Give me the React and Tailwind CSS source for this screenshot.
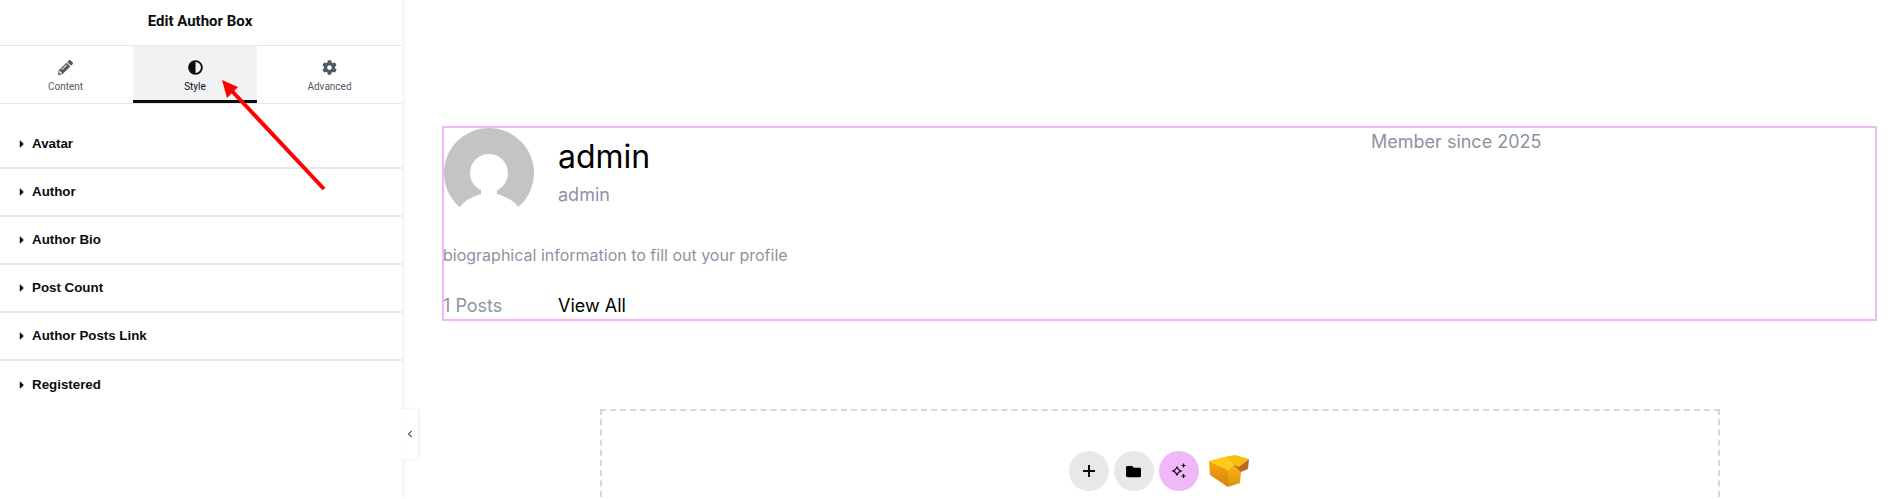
import React from 'react';
import { FaPencilAlt, FaCog, FaCaretRight, FaFolder, FaChevronLeft, FaAdjust } from 'react-icons/fa';

const sections = ['Avatar', 'Author', 'Author Bio', 'Post Count', 'Author Posts Link', 'Registered'];

const Tab = ({ icon, label, active, className }) => (
  <div
    className={`flex flex-col items-center pt-[13px] ${active ? 'bg-[#f1f2f3] text-[#0c0d0e] border-b-[3px] border-[#0c0d0e]' : 'text-[#515962]'} ${className}`}
  >
    <div className="h-[16px] text-[15px] flex items-center">{icon}</div>
    <span className="text-[10px] leading-[14px] mt-[5px]">{label}</span>
  </div>
);

const App = () => {
  return (
    <div className="relative flex w-[1895px] h-[499px] overflow-hidden bg-white font-['Roboto',sans-serif]">
      {/* Panel */}
      <aside className="relative w-[402px] shrink-0 bg-white shadow-[1px_0_6px_rgba(0,0,0,0.08)]">
        <div className="h-[46px] flex items-center justify-center border-b border-[#e6e8ea] text-[15px] font-bold text-[#0c0d0e] pb-[3px] pr-[2px]">
          Edit Author Box
        </div>
        <div className="flex h-[58px] border-b border-[#e6e8ea]">
          <Tab icon={<FaPencilAlt />} label="Content" className="w-[133px] pr-[2px]" />
          <Tab icon={<FaAdjust />} label="Style" active className="w-[124px]" />
          <Tab icon={<FaCog />} label="Advanced" className="flex-1" />
        </div>
        <div className="pt-[17px]">
          {sections.map((name, i) => (
            <div
              key={name}
              className={`h-[48px] flex items-center pl-[15px] gap-[3px] ${i < 5 ? 'border-b-2 border-[#e8e9ea]' : ''}`}
            >
              <FaCaretRight className="text-[12px] text-[#0c0d0e] w-[14px]" />
              <span className="text-[13.33px] font-['Liberation_Sans',sans-serif] font-bold text-[#0c0d0e]">{name}</span>
            </div>
          ))}
        </div>
        <div className="absolute left-[402px] top-[409px] w-[16px] h-[50px] bg-white shadow-[1px_0_3px_rgba(0,0,0,0.08)] flex items-center justify-center text-[#515962]">
          <FaChevronLeft className="text-[8px]" />
        </div>
      </aside>

      {/* Preview */}
      <main className="flex-1 flex flex-col pt-[126px] pl-[40px] pr-[18px] font-['Inter',sans-serif]">
        <div className="h-[195px] shrink-0 border-2 border-[#f0b8f8] flex flex-col">
          <div className="flex h-[97px] shrink-0">
            <div className="w-[114px] shrink-0">
              <svg width="90" height="90" viewBox="0 0 90 90" className="block">
                <circle cx="45" cy="45" r="45" fill="#c4c4c4" />
                <circle cx="45" cy="45" r="19" fill="#fff" />
                <path d="M15 80 Q22 70 37 66 L37 58 L53 58 L53 66 Q68 70 75 80 L90 80 L90 90 L0 90 L0 80 Z" fill="#fff" />
              </svg>
            </div>
            <div className="w-[813px] shrink-0 pt-[9px]">
              <div className="text-[32px] leading-[40px] text-black">admin</div>
              <div className="text-[18px] leading-[24px] mt-[6px] text-[#8d93a3]">admin</div>
            </div>
            <div className="pt-[2px] text-[18px] leading-[24px] text-[#8d93a3]">Member since 2025</div>
          </div>
          <div className="mt-[18px] -ml-[1px] text-[16px] leading-[24px] text-[#8d93a3]">biographical information to fill out your profile</div>
          <div className="flex mt-[27px] -ml-[1px] text-[18px] leading-[24px]">
            <div className="w-[115px] text-[#8d93a3]">1 Posts</div>
            <div className="text-black">View All</div>
          </div>
        </div>

        <div className="mt-[88px] ml-[158px] mr-[157px] h-[200px] shrink-0 border-2 border-dashed border-[#d5d8dc] flex justify-center gap-[5px] pt-[40px] pr-[2px]">
          <div className="w-[40px] h-[40px] rounded-full bg-[#e6e8ea] flex items-center justify-center text-black">
            <svg width="14" height="14" viewBox="0 0 14 14" stroke="#0c0d0e" strokeWidth="2">
              <path d="M7 1v12M1 7h12" />
            </svg>
          </div>
          <div className="w-[40px] h-[40px] rounded-full bg-[#e6e8ea] flex items-center justify-center text-black">
            <FaFolder className="text-[15px]" />
          </div>
          <div className="w-[40px] h-[40px] rounded-full bg-[#f0b8f8] flex items-center justify-center text-black">
            <svg width="18" height="18" viewBox="0 0 18 18" fill="none" stroke="#0c0d0e" strokeWidth="1.2">
              <path d="M7 4.5c.5 2.6 1.6 3.7 4 4.5-2.4.8-3.5 1.9-4 4.5-.5-2.6-1.6-3.7-4-4.5 2.4-.8 3.5-1.9 4-4.5z" />
              <path d="M13.5 1.5v4M11.5 3.5h4M13.5 12v4M11.5 14h4" />
            </svg>
          </div>
          <svg width="41" height="33" viewBox="0 0 41 33" className="ml-[5px] mt-[4px]">
            <defs>
              <linearGradient id="cube-front" x1="0" y1="0" x2="0" y2="1">
                <stop offset="0" stopColor="#f5a80c" />
                <stop offset="1" stopColor="#d9800f" />
              </linearGradient>
              <linearGradient id="cube-right" x1="0" y1="0" x2="0" y2="1">
                <stop offset="0" stopColor="#f8b80a" />
                <stop offset="1" stopColor="#e0920f" />
              </linearGradient>
            </defs>
            <path d="M0 6 L19 15 L19 32 L1 20 Z" fill="url(#cube-front)" />
            <path d="M19 15 L24 10 L32 17 L31 28 L19 32 Z" fill="url(#cube-right)" />
            <path d="M0 6 L15 2 L24 10 L19 15 Z" fill="#ffcb12" />
            <path d="M15 2 L26 0 L40 4 L32 11 L32 17 L24 10 Z" fill="#fbbc10" />
            <path d="M40 4 L39 14 L32 17 L24 10 L30 12 Z" fill="#b9691f" />
          </svg>
        </div>
      </main>

      {/* Annotation arrow */}
      <svg className="absolute left-0 top-0 pointer-events-none" width="420" height="200" viewBox="0 0 420 200">
        <path d="M324 189 L231 90" stroke="#ff0000" strokeWidth="4" />
        <path d="M222 80 L238 87 L227 98 Z" fill="#ff0000" />
      </svg>
    </div>
  );
};

export default App;
